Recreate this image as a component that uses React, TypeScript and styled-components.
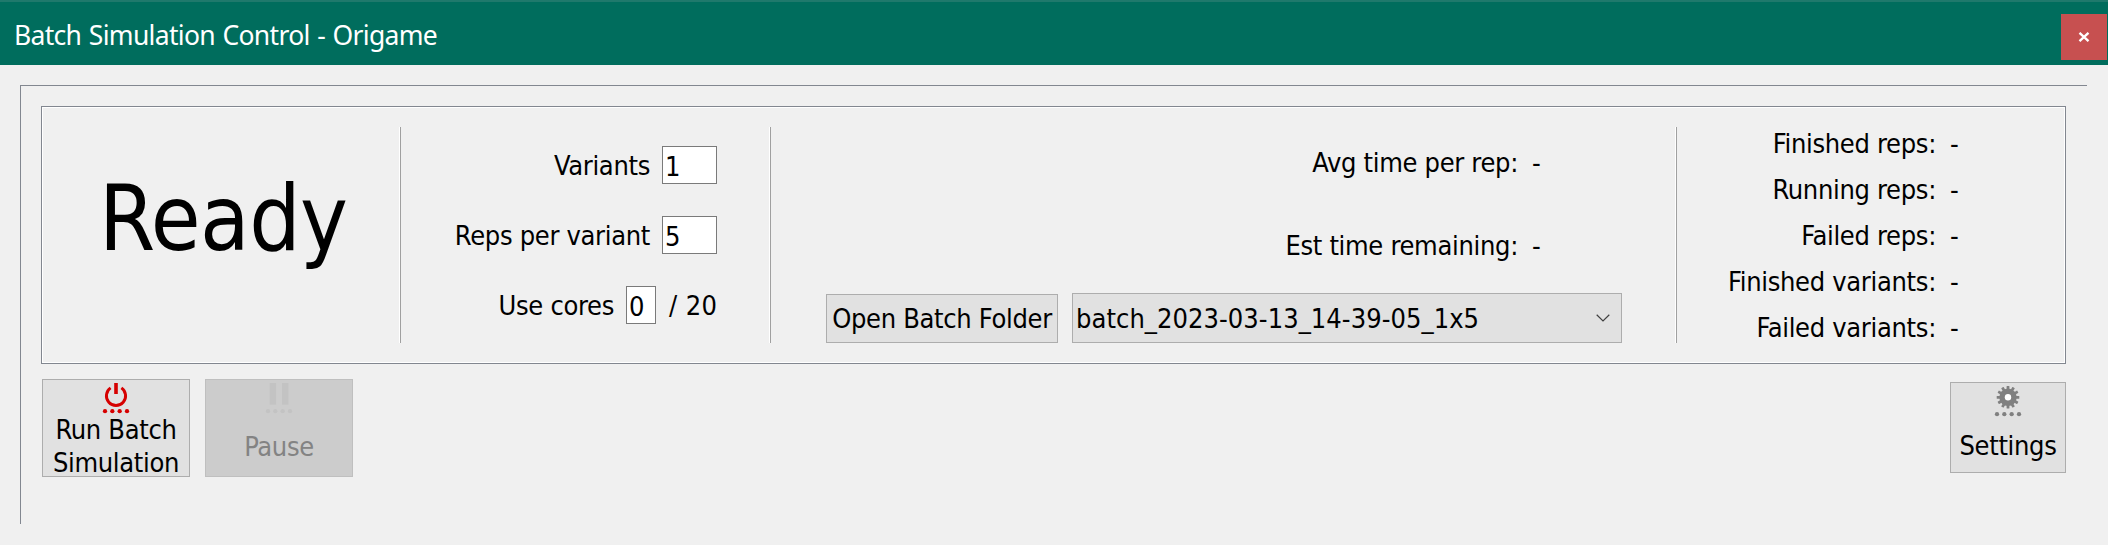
import React from "react";
import styled, { createGlobalStyle } from "styled-components";

const GlobalStyle = createGlobalStyle`
  * { box-sizing: border-box; }
  body {
    margin: 0;
    background: #f0f0f0;
    color: #000;
    font-family: "DejaVu Sans Condensed", "DejaVu Sans", sans-serif;
    font-stretch: condensed;
    font-size: 27px;
    letter-spacing: -0.32px;
  }
`;

const Window = styled.div`
  width: 2108px;
  height: 545px;
  overflow: hidden;
  background: #f0f0f0;
`;

const TitleBar = styled.header`
  display: flex;
  justify-content: space-between;
  height: 65px;
  padding: 12px 1px 0 14px;
  border-top: 2px solid #1f796c;
  background: #006d5d;
`;

const Title = styled.h1`
  margin: 0;
  color: #fff;
  font: 400 26.5px/42px "Noto Sans", sans-serif;
  font-stretch: normal;
  letter-spacing: -0.7px;
  word-spacing: 1.4px;
`;

const CloseButton = styled.button`
  display: flex;
  align-items: center;
  justify-content: center;
  width: 46px;
  height: 46px;
  padding: 0;
  border: 0;
  background: #c75050;
`;

const Frame = styled.main`
  width: 2067px;
  height: 439px;
  margin: 20px 0 0 20px;
  padding: 20px 21px 0 20px;
  border: solid #828790;
  border-width: 1px 0 0 1px;
`;

const StatusPanel = styled.section`
  display: grid;
  grid-template-columns: 357px 2px 368px 2px 904px 2px 1fr;
  height: 258px;
  border: 1px solid #828790;
  box-shadow: inset 0 0 0 1px #fff;
`;

const Divider = styled.div`
  height: 216px;
  margin-top: 20px;
  border-left: 1px solid #fff;
  background: #a0a0a0;
`;

const State = styled.div`
  padding: 57px 0 0 57px;
  font-size: 90px;
  line-height: 110px;
  letter-spacing: -0.5px;
`;

const Inputs = styled.div`
  display: flex;
  flex-direction: column;
  gap: 32px;
  padding: 39px 52px 0 0;
`;

const InputRow = styled.div`
  display: flex;
  justify-content: flex-end;
  height: 38px;
  line-height: 39px;
`;

const Field = styled.input<{ $width: number }>`
  width: ${(p) => p.$width}px;
  height: 38px;
  margin-left: 12px;
  padding: 2px 0 0 2px;
  border: 1px solid #7a7a7a;
  border-radius: 0;
  outline: 0;
  background: #fff;
  color: #000;
  font: inherit;
  letter-spacing: inherit;
`;

const CoreTotal = styled.span`
  width: 48px;
  margin-left: 13px;
  letter-spacing: 0.4px;
  white-space: nowrap;
`;

const Batch = styled.div`
  padding: 36px 53px 0 55px;
`;

const Estimates = styled.div`
  display: flex;
  flex-direction: column;
  gap: 43px;
  height: 150px;
  padding-right: 79px;
`;

const Counters = styled.div`
  display: flex;
  flex-direction: column;
  gap: 6px;
  padding: 17px 104px 0 0;
`;

const StatRow = styled.div`
  display: flex;
  justify-content: flex-end;
  line-height: 40px;
`;

const StatValue = styled.span`
  width: 11px;
  margin-left: 14px;
`;

const BatchPicker = styled.div`
  display: flex;
  align-items: flex-end;
  gap: 14px;
`;

const PushButton = styled.button`
  width: 232px;
  height: 49px;
  padding: 0;
  border: 1px solid #adadad;
  background: #e1e1e1;
  color: #000;
  font: inherit;
  letter-spacing: inherit;
  white-space: nowrap;
`;

const Combo = styled.div`
  display: flex;
  align-items: center;
  justify-content: space-between;
  width: 550px;
  height: 50px;
  padding: 0 11px 0 3px;
  border: 1px solid #adadad;
  background: #e1e1e1;
  letter-spacing: 0.05px;
`;

const Actions = styled.div`
  display: flex;
  gap: 15px;
  padding: 15px 0 0 1px;
`;

const ToolButton = styled.button<{ $width?: number }>`
  display: flex;
  flex-direction: column;
  align-items: center;
  width: ${(p) => p.$width ?? 148}px;
  height: 98px;
  padding: 3px 0 0;
  border: 1px solid #adadad;
  background: #e1e1e1;
  color: #000;
  font: inherit;
  letter-spacing: inherit;
  &:disabled {
    border-color: #bfbfbf;
    background: #ccc;
    color: #838383;
  }
`;

const SettingsButton = styled(ToolButton)`
  height: 91px;
  margin: 3px 0 0 auto;
`;

const ToolLabel = styled.span<{ $top?: number }>`
  margin-top: ${(p) => p.$top ?? -1}px;
  line-height: 33px;
`;

const Glyph = styled.svg`
  flex: none;
  display: block;
`;

const Dots = () => (
  <>
    {[3, 10.33, 17.67, 25].map((x) => (
      <circle key={x} cx={x} cy="28.2" r="2.15" />
    ))}
  </>
);

const PowerIcon = () => (
  <Glyph width="28" height="31" viewBox="0 0 28 31" fill="#d60000">
    <path d="M8.6 4.9A9.6 9.6 0 1 0 19.4 4.9" fill="none" stroke="#d60000" strokeWidth="2.9" />
    <rect x="12.2" y="0" width="3.6" height="11" />
    <Dots />
  </Glyph>
);

const PauseIcon = () => (
  <Glyph width="28" height="31" viewBox="0 0 28 31" fill="#c3c3c3">
    <rect x="4.7" y="0" width="6.4" height="21.7" />
    <rect x="17" y="0" width="6.4" height="21.7" />
    <Dots />
  </Glyph>
);

const GearIcon = () => (
  <Glyph width="28" height="31" viewBox="0 0 28 31" fill="#808080">
    {Array.from({ length: 12 }, (_, i) => (
      <rect key={i} x="12.6" y="0" width="2.8" height="5" rx="0.5" transform={`rotate(${i * 30} 14 11.3)`} />
    ))}
    <circle cx="14" cy="11.3" r="8.7" />
    <circle cx="14" cy="11.3" r="3.2" fill="#fff" />
    <Dots />
  </Glyph>
);

const Stat = ({ label }: { label: string }) => (
  <StatRow>
    <span>{label}:</span>
    <StatValue>-</StatValue>
  </StatRow>
);

const counters = ["Finished reps", "Running reps", "Failed reps", "Finished variants", "Failed variants"];

export default function App() {
  return (
    <Window>
      <GlobalStyle />
      <TitleBar>
        <Title>Batch Simulation Control - Origame</Title>
        <CloseButton aria-label="Close">
          <Glyph width="12" height="10" viewBox="0 0 12 10">
            <path d="M1.5 .8L10.5 9.2M10.5 .8L1.5 9.2" stroke="#fff" strokeWidth="2.3" />
          </Glyph>
        </CloseButton>
      </TitleBar>
      <Frame>
        <StatusPanel>
          <State>Ready</State>
          <Divider />
          <Inputs>
            <InputRow>
              <span>Variants</span>
              <Field $width={55} defaultValue="1" />
            </InputRow>
            <InputRow>
              <span>Reps per variant</span>
              <Field $width={55} defaultValue="5" />
            </InputRow>
            <InputRow>
              <span>Use cores</span>
              <Field $width={30} defaultValue="0" />
              <CoreTotal>/ 20</CoreTotal>
            </InputRow>
          </Inputs>
          <Divider />
          <Batch>
            <Estimates>
              <Stat label="Avg time per rep" />
              <Stat label="Est time remaining" />
            </Estimates>
            <BatchPicker>
              <PushButton>Open Batch Folder</PushButton>
              <Combo>
                <span>batch_2023-03-13_14-39-05_1x5</span>
                <Glyph width="14" height="8" viewBox="0 0 14 8">
                  <path d="M.7 .8L7 7L13.3 .8" fill="none" stroke="#404040" strokeWidth="1.2" />
                </Glyph>
              </Combo>
            </BatchPicker>
          </Batch>
          <Divider />
          <Counters>
            {counters.map((label) => (
              <Stat key={label} label={label} />
            ))}
          </Counters>
        </StatusPanel>
        <Actions>
          <ToolButton>
            <PowerIcon />
            <ToolLabel>
              Run Batch
              <br />
              Simulation
            </ToolLabel>
          </ToolButton>
          <ToolButton disabled>
            <PauseIcon />
            <ToolLabel $top={16}>Pause</ToolLabel>
          </ToolButton>
          <SettingsButton $width={116}>
            <GearIcon />
            <ToolLabel $top={12}>Settings</ToolLabel>
          </SettingsButton>
        </Actions>
      </Frame>
    </Window>
  );
}
